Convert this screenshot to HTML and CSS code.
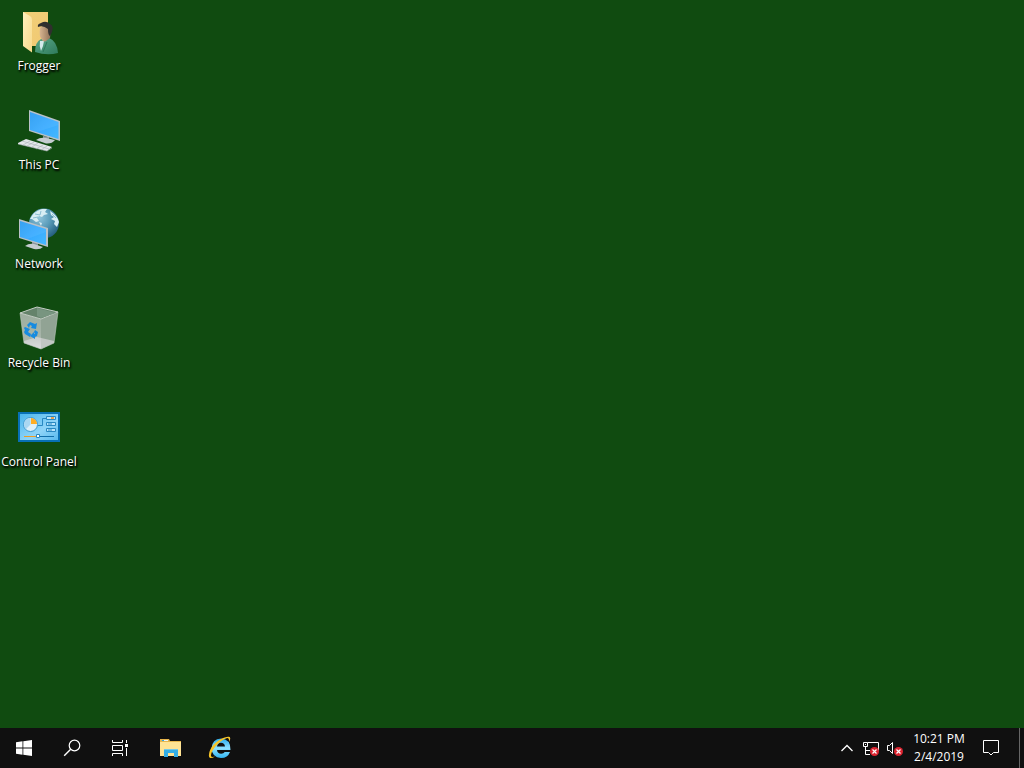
FILE: index.html
```html
<!DOCTYPE html>
<html lang="en">
<head>
<meta charset="utf-8">
<title>Desktop</title>
<link rel="stylesheet" href="styles.css">
</head>
<body>
<main class="desktop">
  <button class="shortcut">
    <svg class="shortcut-icon" viewBox="0 0 48 48" aria-hidden="true">
      <defs>
        <linearGradient id="folder" x1="0" y1="0" x2="1" y2="1"><stop offset="0" stop-color="#f2d078"/><stop offset="1" stop-color="#f0c873"/></linearGradient>
        <linearGradient id="flap" x1="0" y1="0" x2="1" y2="1"><stop offset="0" stop-color="#fff0bd"/><stop offset="1" stop-color="#f7d98c"/></linearGradient>
        <linearGradient id="coat" x1="0" y1="0" x2="1" y2="1"><stop offset="0" stop-color="#5aa88a"/><stop offset="1" stop-color="#2f7a5b"/></linearGradient>
        <linearGradient id="skin" x1="0" y1="0" x2="1" y2="0"><stop offset="0" stop-color="#d8b590"/><stop offset="1" stop-color="#8d6f55"/></linearGradient>
      </defs>
      <path d="M8 4H33V38H8z" fill="url(#folder)"/>
      <path d="M8 4L15 8Q17 9 17 12V44.500L8 38z" fill="url(#flap)"/>
      <path d="M20 44Q20 34 26 31L34 30Q42 33 43 45Q32 48 20 44z" fill="url(#coat)"/>
      <path d="M25 33L29 33L28 38L26 43Q24 38 25 33z" fill="#d5e9ea"/>
      <path d="M25 20Q24 28 26 30Q28 35 31 33L35 30L36 19L29 17z" fill="url(#skin)"/>
      <path d="M23 19Q22 16 26 15Q31 12 35 16Q39 18 37 24L35 28Q33 27 33 21Q28 17 23 19z" fill="#302f2e"/>
      <path d="M32 34L28 44" fill="none" stroke="#2d755a"/>
    </svg>
    <span class="shortcut-label">Frogger</span>
  </button>
  <button class="shortcut">
    <svg class="shortcut-icon" viewBox="0 0 48 48" aria-hidden="true">
      <defs><linearGradient id="screen" x1="0" y1="0" x2="1" y2="1"><stop offset="0" stop-color="#2799ef"/><stop offset=".5" stop-color="#38aaff"/><stop offset="1" stop-color="#45b8ff"/></linearGradient></defs>
      <path d="M28 29L34 30V35H28z" fill="#8c969c"/>
      <path d="M21 33Q25 30 31 31L40 33Q37 37 31 36.500z" fill="#c5ccd0"/>
      <path d="M14 3L45 14V34L14 24z" fill="#b9c1c7"/>
      <path d="M15 5L43.500 15V32L15 23z" fill="url(#screen)"/>
      <path d="M43.500 15V18L22 25L15 23V5z" fill="#8bd0ff" opacity=".16"/>
      <path d="M3 36L11 32L37 40L32 44L3 37z" fill="#e3e6ea"/>
      <path d="M3 37L32 44L37 41M7 34L34 42M15 34L8 38M19 35L12 39M23 36L17 40M28 38L21 42M32 39L26 43" fill="none" stroke="#a9b0b5" stroke-width=".6"/>
    </svg>
    <span class="shortcut-label">This PC</span>
  </button>
  <button class="shortcut">
    <svg class="shortcut-icon" viewBox="0 0 48 48" aria-hidden="true">
      <defs><radialGradient id="globe" cx=".35" cy=".3" r=".8"><stop offset="0" stop-color="#91c4db"/><stop offset=".45" stop-color="#5a9cba"/><stop offset="1" stop-color="#1d5575"/></radialGradient></defs>
      <circle cx="29" cy="17.500" r="15" fill="url(#globe)"/>
      <path d="M15 13Q19 5 27 3L32 3L30 6L33 8L29 9L27 11L24 10L22 12L24 15L21 16L17 13zM35 5Q42 9 44 16L42 21L39 18L40 15L36 13L39 11L36 9zM24 16L27 17L26 20z" fill="#d8edf4"/>
      <path d="M20 8L25 9M26 5L25 9M18 12L23 11M37 8L41 12" stroke="#77b1ca" stroke-width=".8"/>
      <path d="M17 34L23 36V42H17z" fill="#8c969c"/>
      <path d="M10 40Q14 37 19 38L28 41Q25 44 19 43z" fill="#c5ccd0"/>
      <path d="M4 13L33 22V41L4 32z" fill="#b9c1c7"/>
      <path d="M5 15L31 23V39L5 31z" fill="url(#screen)"/>
      <path d="M31 23V26L12 33L5 31V15z" fill="#8bd0ff" opacity=".16"/>
    </svg>
    <span class="shortcut-label">Network</span>
  </button>
  <button class="shortcut">
    <svg class="shortcut-icon" viewBox="0 0 48 48" aria-hidden="true">
      <defs><linearGradient id="bin" x1="0" y1="0" x2="0" y2="1"><stop offset="0" stop-color="#9dae9f"/><stop offset=".75" stop-color="#a9b6ab"/><stop offset="1" stop-color="#d3d5d5"/></linearGradient></defs>
      <path d="M5 8L26 14V44L9 38z" fill="url(#bin)"/>
      <path d="M26 14L43 7L39 38L26 44z" fill="#91a394"/>
      <path d="M9 36L22 32L39 36V38L26 44L9 38z" fill="#e2e0e5" opacity=".6"/>
      <path d="M5 8L22 2L43 7L26 14z" fill="#65836b" stroke="#c5cec6"/>
      <path d="M22 3V11L26 13L41 8z" fill="#789580"/>
      <path d="M5 8L9 38L26 44L39 38L43 7" fill="none" stroke="#bcc8be" stroke-width=".6"/>
      <g fill="#168be0">
        <path d="M12 20L15 17L20 19L22 18L21 24L16 23L17 21L15 20L14 23z"/>
        <path d="M10 22L15 24L13 27L16 29L15 32L10 29L9 27L10 25L9 23z"/>
        <path d="M20 25L23 27L22 31L20 32V34L15 31L19 27V29L20 29L19 27z"/>
      </g>
    </svg>
    <span class="shortcut-label">Recycle Bin</span>
  </button>
  <button class="shortcut">
    <svg class="shortcut-icon" viewBox="0 0 48 48" aria-hidden="true">
      <defs><linearGradient id="panel" x1="0" y1="0" x2="1" y2="1"><stop offset="0" stop-color="#4bb5ec"/><stop offset=".6" stop-color="#8fd4f8"/><stop offset="1" stop-color="#58b9ee"/></linearGradient></defs>
      <path d="M3 8H45V38H3z" fill="#0870b5"/>
      <path d="M5 10H43V36H5z" fill="url(#panel)"/>
      <circle cx="15.500" cy="20.500" r="7" fill="#dceffa" stroke="#3b98ce"/>
      <path d="M15.500 20.500V14A6.500 6.500 0 0 0 11 25z" fill="#a9d7f2"/>
      <path d="M16 20V14A6 6 0 0 1 22 20z" fill="#ffad24"/>
      <path d="M23 21.500H27.500V14.500H31" fill="none" stroke="#2888c2"/>
      <path d="M31.500 12.500H40.500V15.500H31.500zM31.500 18.500H40.500V21.500H31.500zM31.500 24.500H40.500V27.500H31.500z" fill="#b9e4fc" stroke="#2888c2"/>
      <path d="M36 14H39" stroke="#f58a16" stroke-width="1.500"/>
      <path d="M33 20H37M33 26H37" stroke="#2888c2"/>
      <path d="M23 32.500H39" stroke="#126faa"/>
      <path d="M9 32.500H22" stroke="#eb9c24"/>
      <path d="M21.500 30.500H24.500V33.500H21.500z" fill="#fff" stroke="#2888c2"/>
    </svg>
    <span class="shortcut-label">Control Panel</span>
  </button>
</main>
<footer class="taskbar">
  <nav class="launchers" aria-label="Taskbar">
    <button class="task" aria-label="Start">
      <svg class="icon-24" viewBox="0 0 24 24"><path d="M4 6.300L10.500 5.300V11.500H4zM11.300 5.200L20 4V11.500H11.300zM4 12.400H10.500V18.700L4 17.700zM11.300 12.400H20V20L11.300 18.800z" fill="#fff"/></svg>
    </button>
    <button class="task" aria-label="Search">
      <svg class="icon-24" viewBox="0 0 24 24"><circle cx="14.500" cy="9.500" r="5.300" fill="none" stroke="#fff" stroke-width="1.200"/><path d="M10.700 13.300L4.200 19.800" stroke="#fff" stroke-width="1.400"/></svg>
    </button>
    <button class="task" aria-label="Task View">
      <svg class="icon-24" viewBox="0 0 24 24"><path d="M4.500 4V6.500H14.500V4M4.500 9.500H14.500V14.500H4.500zM4.500 20V17.500H14.500V20M18.500 4V7M18.500 12V20" fill="none" stroke="#fff"/><path d="M17 8H20V11H17z" fill="#fff"/></svg>
    </button>
    <span class="pinned">
      <button class="task" aria-label="File Explorer">
        <svg class="icon-24" viewBox="0 0 24 24"><path d="M1 3H10L11 5H22V20H1z" fill="#e8b64c"/><path d="M3 4H9V5H3z" fill="#eef6fa"/><path d="M3 4H5V5H3z" fill="#33a5dc"/><path d="M1 6H22V20H1z" fill="#ffe394"/><path d="M5 14H19V21H15V17H9V21H5z" fill="#35aee5"/><path d="M5 13H19V14H5z" fill="#75c8e6"/></svg>
      </button>
      <button class="task" aria-label="Internet Explorer">
        <svg class="icon-24" viewBox="0 0 24 24"><defs><linearGradient id="ie" x1="0" y1="0" x2="0" y2="1"><stop offset="0" stop-color="#2badee"/><stop offset=".5" stop-color="#8ee1ff"/><stop offset="1" stop-color="#31b6f4"/></linearGradient></defs><path d="M22.500 14H9Q9.500 17.800 13.200 17.800Q15.700 17.800 16.700 16H22Q19.800 22 13 22Q4 21.500 3.500 12.500Q4 3 13 2.500Q22.800 3 22.500 14zM9 10.500H17Q16.500 6.800 13 6.800Q9.700 6.800 9 10.500z" fill="url(#ie)"/><path d="M21 6Q23.500 1.500 21 .8Q18 .3 12 3.500Q4.500 8 1.700 15Q0 20.500 1.800 21.800Q3.500 22.700 7 20.500Q3.500 21.500 3 20Q2.500 17 7 11Q13 4 18.500 2.200Q21.500 1.500 21 6z" fill="#f6c529"/></svg>
      </button>
    </span>
  </nav>
  <section class="tray" aria-label="Notification area">
    <button class="tray-button" aria-label="Show hidden icons">
      <svg class="icon-24" viewBox="0 0 24 24"><path d="M6.500 15L12 9.500L17.500 15" fill="none" stroke="#fff" stroke-width="1.300"/></svg>
    </button>
    <button class="tray-button" aria-label="Network disconnected">
      <svg class="icon-24" viewBox="0 0 24 24"><path d="M4.500 6.500H8.500V10.500H4.500zM8.500 6.500H19.500V14.500M6.500 10.500V18.500H11M6.500 14.500H11" fill="none" stroke="#fff"/><path d="M6 8H7V9H6z" fill="#fff"/><circle cx="15.500" cy="15.500" r="4.500" fill="#dc2430"/><path d="M13.500 13.500L17.500 17.500M17.500 13.500L13.500 17.500" stroke="#fff" stroke-width="1.200"/></svg>
    </button>
    <button class="tray-button" aria-label="Volume unavailable">
      <svg class="icon-24" viewBox="0 0 24 24"><path d="M6.500 9.500H4.500V14.500H6.500L9.500 17.500V6.500L6.500 9.500" fill="none" stroke="#fff"/><circle cx="15.500" cy="15.500" r="4.500" fill="#dc2430"/><path d="M13.500 13.500L17.500 17.500M17.500 13.500L13.500 17.500" stroke="#fff" stroke-width="1.200"/></svg>
    </button>
    <button class="clock"><time>10:21 PM</time><time>2/4/2019</time></button>
    <button class="action" aria-label="Action Center">
      <svg class="icon-24" viewBox="0 0 24 24"><path d="M4.500 4.500H19.500V16.500H14.500L12 19L9.500 16.500H4.500z" fill="none" stroke="#fff"/></svg>
    </button>
    <button class="show-desktop" aria-label="Show desktop"></button>
  </section>
</footer>
</body>
</html>
```
FILE: styles.css
```css
* {
  box-sizing: border-box;
}

body {
  display: flex;
  flex-direction: column;
  min-height: 100vh;
  margin: 0;
  background: #104b10;
  color: #fff;
  font: 12px/16px "Open Sans", "Noto Sans", sans-serif;
}

button {
  display: flex;
  align-items: center;
  justify-content: center;
  margin: 0;
  padding: 0;
  border: 0;
  background: none;
  color: inherit;
  font: inherit;
}

svg {
  display: block;
}

.desktop {
  display: flex;
  flex: 1;
  flex-direction: column;
  align-items: flex-start;
  gap: 33px;
  padding-top: 8px;
}

.shortcut {
  flex-direction: column;
  gap: 2px;
  width: 78px;
}

.shortcut-icon {
  width: 48px;
  height: 48px;
}

.shortcut-label {
  white-space: nowrap;
  text-shadow: 1px 1px 2px #000, 1px 2px 2px #000;
}

.taskbar {
  display: flex;
  justify-content: space-between;
  height: 40px;
  background: #101010;
}

.launchers,
.tray {
  display: flex;
}

.pinned {
  display: flex;
  gap: 1px;
  margin-left: 3px;
}

.task {
  width: 48px;
  height: 40px;
}

.icon-24 {
  width: 24px;
  height: 24px;
}

.tray-button {
  width: 24px;
}

.clock {
  flex-direction: column;
  gap: 2px;
  width: 64px;
}

.action {
  width: 40px;
}

.show-desktop {
  width: 5px;
  margin-left: 8px;
  border-left: 1px solid #666;
}
```
